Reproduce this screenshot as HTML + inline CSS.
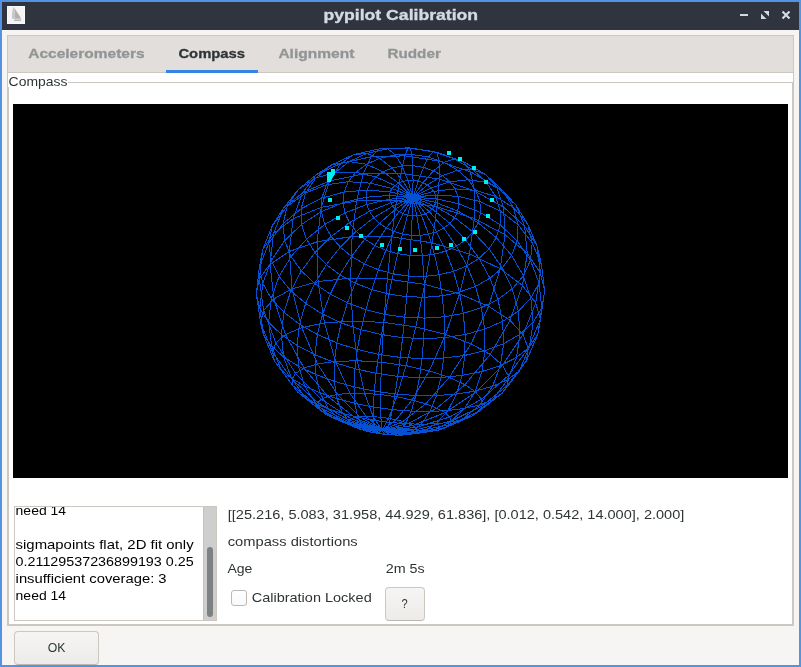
<!DOCTYPE html>
<html><head><meta charset="utf-8"><style>
html,body{margin:0;padding:0;}
body{width:801px;height:667px;overflow:hidden;position:relative;background:#5294e2;font-family:"Liberation Sans",sans-serif;}
div{position:absolute;box-sizing:border-box;}
svg{position:absolute;left:0;top:0;}
text{font-family:"Liberation Sans",sans-serif;}
</style></head><body>
<div style="left:2px;top:2px;width:797px;height:28px;background:#2f343f;"></div>
<div style="left:2px;top:30px;width:797px;height:635px;background:#f6f5f4;"></div>
<!-- notebook header -->
<div style="left:7px;top:35px;width:787px;height:38px;background:#e1dedb;border:1px solid #cdc7c2;"></div>
<div style="left:166px;top:70px;width:92px;height:3px;background:#3584e4;"></div>
<!-- page -->
<div style="left:7px;top:73px;width:787px;height:553px;background:#fff;border:1px solid #cdc7c2;border-top:none;"></div>
<!-- static box -->
<div style="left:8px;top:82px;width:785px;height:543px;border:1px solid #cdc7c2;"></div>
<div style="left:8px;top:74px;width:60px;height:13px;background:#fff;"></div>
<!-- canvas -->
<div style="left:13px;top:104px;width:775px;height:374px;background:#000;overflow:hidden;">
<svg width="775" height="374" viewBox="0 0 775 374" style="position:absolute;left:0;top:0">
<path d="M399.85 93.27 L423.17 94.77 L445.93 99.82 L467.52 108.50 L487.22 120.86 L504.19 136.86 L517.47 156.34 L526.03 178.91 L528.80 203.89 L524.86 230.24 L513.57 256.55 L494.82 281.05 L469.24 301.82 L438.26 317.07 L404.04 325.42 L369.16 326.19 M399.85 93.27 L422.47 91.01 L445.02 92.33 L466.86 97.55 L487.19 106.94 L505.05 120.71 L519.26 138.90 L528.57 161.27 L531.66 187.16 L527.43 215.40 L515.25 244.29 L495.22 271.68 L468.39 295.28 L436.69 313.03 L402.70 323.52 L369.16 326.19 M399.85 93.27 L420.73 87.34 L441.93 84.88 L462.85 86.42 L482.68 92.50 L500.39 103.63 L514.70 120.13 L524.13 141.99 L527.20 168.67 L522.71 198.90 L510.04 230.64 L489.57 261.30 L462.73 288.10 L431.88 308.67 L399.80 321.50 L369.16 326.19 M399.85 93.27 L418.00 83.95 L436.69 77.87 L455.40 75.74 L473.40 78.36 L489.67 86.57 L502.91 101.04 L511.61 122.10 L514.20 149.39 L509.48 181.57 L496.95 216.31 L477.21 250.44 L451.99 280.65 L423.82 304.19 L395.43 319.48 L369.16 326.19 M399.85 93.27 L414.38 81.02 L429.46 71.70 L444.69 66.18 L459.43 65.48 L472.80 70.76 L483.63 83.07 L490.53 103.11 L492.07 130.75 L487.19 164.71 L475.58 202.30 L458.01 239.83 L436.26 273.40 L412.72 299.87 L389.75 317.54 L369.16 326.19 M399.85 93.27 L410.04 78.69 L420.58 66.75 L431.16 58.42 L441.32 54.89 L450.38 57.58 L457.44 67.87 L461.45 86.81 L461.35 114.57 L456.41 149.90 L446.58 189.89 L432.66 230.36 L416.20 266.89 L399.09 295.98 L383.02 315.80 L369.16 326.19 M399.85 93.27 L405.19 77.10 L410.50 63.35 L415.58 53.06 L420.13 47.52 L423.77 48.32 L425.99 57.06 L426.23 75.06 L424.02 102.71 L419.15 138.84 L411.83 180.42 L402.78 222.96 L393.04 261.67 L383.69 292.79 L375.57 314.35 L369.16 326.19 M399.85 93.27 L400.06 76.32 L399.79 61.72 L398.93 50.51 L397.37 44.04 L395.03 43.92 L391.87 51.86 L387.93 69.26 L383.42 96.62 L378.72 132.86 L374.33 174.96 L370.78 218.38 L368.46 258.21 L367.50 290.53 L367.82 313.28 L369.16 326.19 M399.85 93.27 L394.93 76.41 L389.08 61.97 L382.32 50.97 L374.73 44.73 L366.54 44.79 L358.16 52.77 L350.22 70.00 L343.56 96.95 L339.11 132.59 L337.63 174.06 L339.46 217.03 L344.36 256.76 L351.59 289.37 L360.17 312.65 L369.16 326.19 M399.85 93.27 L390.04 77.34 L379.00 64.05 L366.84 54.34 L353.88 49.41 L340.60 50.66 L327.81 59.47 L316.57 76.93 L308.22 103.37 L304.07 137.78 L305.07 177.59 L311.45 218.91 L322.55 257.40 L336.98 289.34 L353.04 312.48 L369.16 326.19 M399.85 93.27 L385.65 79.07 L370.08 67.79 L353.44 60.27 L336.18 57.55 L319.03 60.74 L303.03 70.93 L289.54 88.89 L280.12 114.72 L276.28 147.46 L279.08 184.87 L288.75 223.63 L304.48 259.93 L324.55 290.40 L346.81 312.77 L369.16 326.19 M399.85 93.27 L381.95 81.50 L362.79 72.93 L342.78 68.27 L322.54 68.32 L302.92 73.90 L285.08 85.75 L270.43 104.29 L260.57 129.43 L257.02 160.25 L260.88 194.86 L272.46 230.52 L291.04 264.05 L314.90 292.44 L341.75 313.50 L369.16 326.19 M399.85 93.27 L379.10 84.48 L357.40 79.13 L335.27 77.73 L313.40 80.83 L292.67 88.94 L274.21 102.46 L259.37 121.54 L249.60 145.93 L246.31 174.75 L250.58 206.46 L262.83 238.85 L282.58 269.31 L308.39 295.26 L338.10 314.62 L369.16 326.19 M399.85 93.27 L377.22 87.87 L354.10 86.02 L331.05 88.03 L308.77 94.18 L288.09 104.72 L270.01 119.77 L255.70 139.28 L246.41 162.88 L243.34 189.77 L247.51 218.71 L259.45 247.92 L278.99 275.30 L305.10 298.65 L335.95 316.05 L369.16 326.19 M399.85 93.27 L376.36 91.49 L352.90 93.24 L330.02 98.60 L308.35 107.63 L288.61 120.35 L271.63 136.70 L258.34 156.49 L249.75 179.29 L246.87 204.43 L250.61 230.85 L261.57 257.15 L279.85 281.63 L304.90 302.40 L335.35 317.71 L369.16 326.19 M399.85 93.27 L376.53 95.19 L353.72 100.45 L331.93 108.94 L311.67 120.55 L293.51 135.15 L278.08 152.55 L266.09 172.49 L258.33 194.55 L255.60 218.12 L258.69 242.35 L268.24 266.11 L284.58 287.97 L307.53 306.32 L336.25 319.53 L369.16 326.19 M399.85 93.27 L377.68 98.80 L356.42 107.35 L336.45 118.66 L318.18 132.51 L302.00 148.66 L288.39 166.88 L277.83 186.88 L270.93 208.26 L268.32 230.50 L270.65 252.89 L278.57 274.48 L292.51 294.07 L312.63 310.22 L338.54 321.41 L369.16 326.19 M399.85 93.27 L379.74 102.18 L360.76 113.70 L343.19 127.46 L327.30 143.18 L313.36 160.60 L301.68 179.45 L292.60 199.45 L286.55 220.26 L284.02 241.41 L285.55 262.29 L291.72 282.09 L303.03 299.75 L319.82 313.98 L342.06 323.28 L369.16 326.19 M399.85 93.27 L382.60 105.20 L366.51 119.28 L351.76 135.10 L338.52 152.36 L326.95 170.78 L317.23 190.13 L309.61 210.12 L304.39 230.46 L301.91 250.74 L302.62 270.44 L307.00 288.80 L315.55 304.89 L328.70 317.46 L346.64 325.07 L369.16 326.19 M399.85 93.27 L386.13 107.75 L373.41 123.94 L361.78 141.43 L351.35 159.91 L342.20 179.13 L334.46 198.86 L328.26 218.86 L323.81 238.87 L321.36 258.51 L321.24 277.29 L323.84 294.56 L329.58 309.38 L338.88 320.58 L352.07 326.72 L369.16 326.19 M399.85 93.27 L390.19 109.74 L381.18 127.56 L372.89 146.33 L365.37 165.75 L358.68 185.59 L352.87 205.64 L348.05 225.69 L344.33 245.49 L341.89 264.69 L340.94 282.85 L341.75 299.30 L344.66 313.16 L350.01 323.27 L358.12 328.16 L369.16 326.19 M399.85 93.27 L394.61 111.10 L389.55 130.04 L384.73 149.71 L380.19 169.81 L375.97 190.12 L372.09 210.45 L368.61 230.60 L365.59 250.33 L363.12 269.31 L361.33 287.08 L360.36 303.00 L360.42 316.19 L361.75 325.46 L364.59 329.36 L369.16 326.19 M399.85 93.27 L399.22 111.79 L398.25 131.33 L396.99 151.51 L395.47 172.04 L393.72 192.69 L391.76 213.28 L389.60 233.60 L387.26 253.40 L384.74 272.34 L382.08 289.97 L379.31 305.62 L376.50 318.40 L373.75 327.11 L371.24 330.27 L369.16 326.19 M399.85 93.27 L403.86 111.78 L407.01 131.39 L409.34 151.69 L410.87 172.39 L411.62 193.26 L411.58 214.08 L410.74 234.63 L409.06 254.64 L406.46 273.76 L402.90 291.49 L398.28 307.13 L392.56 319.76 L385.71 328.17 L377.83 330.86 L369.16 326.19 M399.85 93.27 L408.35 111.07 L415.54 130.19 L421.43 150.22 L426.02 170.83 L429.30 191.77 L431.22 212.79 L431.71 233.64 L430.68 254.01 L427.99 273.50 L423.47 291.57 L416.94 307.47 L408.24 320.23 L397.29 328.61 L384.16 331.12 L369.16 326.19 M399.85 93.27 L412.52 109.67 L423.57 127.75 L432.94 147.08 L440.57 167.31 L446.39 188.16 L450.30 209.33 L452.16 230.53 L451.79 251.40 L448.97 271.47 L443.43 290.13 L434.91 306.57 L423.18 319.75 L408.16 328.38 L389.97 331.02 L369.16 326.19 M399.85 93.27 L416.20 107.64 L430.80 124.12 L443.48 142.29 L454.08 161.81 L462.46 182.35 L468.39 203.58 L471.65 225.17 L471.95 246.66 L468.96 267.53 L462.33 287.06 L451.74 304.35 L436.95 318.27 L417.94 327.48 L395.05 330.56 L369.16 326.19 M399.85 93.27 L419.23 105.03 L436.93 119.36 L452.64 135.90 L466.09 154.32 L476.96 174.28 L484.93 195.45 L489.62 217.41 L490.59 239.67 L487.41 261.56 L479.63 282.27 L466.89 300.74 L449.04 315.74 L426.25 325.88 L399.19 329.74 L369.16 326.19 M399.85 93.27 L421.48 101.93 L441.67 113.60 L460.00 128.00 L476.02 144.88 L489.27 163.95 L499.23 184.85 L505.33 207.15 L506.97 230.25 L503.56 253.41 L494.57 275.62 L479.68 295.67 L458.89 312.15 L432.68 323.58 L402.18 328.59 L369.16 326.19 M399.85 93.27 L422.82 98.47 L444.75 107.01 L465.11 118.78 L483.29 133.64 L498.63 151.41 L510.41 171.77 L517.84 194.29 L520.11 218.33 L516.44 242.97 L506.26 267.04 L489.31 289.09 L465.85 307.49 L436.81 320.62 L403.84 327.13 L369.16 326.19 M423.17 94.77 L422.47 91.01 L420.73 87.34 L418.00 83.95 L414.38 81.02 L410.04 78.69 L405.19 77.10 L400.06 76.32 L394.93 76.41 L390.04 77.34 L385.65 79.07 L381.95 81.50 L379.10 84.48 L377.22 87.87 L376.36 91.49 L376.53 95.19 L377.68 98.80 L379.74 102.18 L382.60 105.20 L386.13 107.75 L390.19 109.74 L394.61 111.10 L399.22 111.79 L403.86 111.78 L408.35 111.07 L412.52 109.67 L416.20 107.64 L419.23 105.03 L421.48 101.93 L422.82 98.47 Z M445.93 99.82 L445.02 92.33 L441.93 84.88 L436.69 77.87 L429.46 71.70 L420.58 66.75 L410.50 63.35 L399.79 61.72 L389.08 61.97 L379.00 64.05 L370.08 67.79 L362.79 72.93 L357.40 79.13 L354.10 86.02 L352.90 93.24 L353.72 100.45 L356.42 107.35 L360.76 113.70 L366.51 119.28 L373.41 123.94 L381.18 127.56 L389.55 130.04 L398.25 131.33 L407.01 131.39 L415.54 130.19 L423.57 127.75 L430.80 124.12 L436.93 119.36 L441.67 113.60 L444.75 107.01 Z M467.52 108.50 L466.86 97.55 L462.85 86.42 L455.40 75.74 L444.69 66.18 L431.16 58.42 L415.58 53.06 L398.93 50.51 L382.32 50.97 L366.84 54.34 L353.44 60.27 L342.78 68.27 L335.27 77.73 L331.05 88.03 L330.02 98.60 L331.93 108.94 L336.45 118.66 L343.19 127.46 L351.76 135.10 L361.78 141.43 L372.89 146.33 L384.73 149.71 L396.99 151.51 L409.34 151.69 L421.43 150.22 L432.94 147.08 L443.48 142.29 L452.64 135.90 L460.00 128.00 L465.11 118.78 Z M487.22 120.86 L487.19 106.94 L482.68 92.50 L473.40 78.36 L459.43 65.48 L441.32 54.89 L420.13 47.52 L397.37 44.04 L374.73 44.73 L353.88 49.41 L336.18 57.55 L322.54 68.32 L313.40 80.83 L308.77 94.18 L308.35 107.63 L311.67 120.55 L318.18 132.51 L327.30 143.18 L338.52 152.36 L351.35 159.91 L365.37 165.75 L380.19 169.81 L395.47 172.04 L410.87 172.39 L426.02 170.83 L440.57 167.31 L454.08 161.81 L466.09 154.32 L476.02 144.88 L483.29 133.64 Z M504.19 136.86 L505.05 120.71 L500.39 103.63 L489.67 86.57 L472.80 70.76 L450.38 57.58 L423.77 48.32 L395.03 43.92 L366.54 44.79 L340.60 50.66 L319.03 60.74 L302.92 73.90 L292.67 88.94 L288.09 104.72 L288.61 120.35 L293.51 135.15 L302.00 148.66 L313.36 160.60 L326.95 170.78 L342.20 179.13 L358.68 185.59 L375.97 190.12 L393.72 192.69 L411.62 193.26 L429.30 191.77 L446.39 188.16 L462.46 182.35 L476.96 174.28 L489.27 163.95 L498.63 151.41 Z M517.47 156.34 L519.26 138.90 L514.70 120.13 L502.91 101.04 L483.63 83.07 L457.44 67.87 L425.99 57.06 L391.87 51.86 L358.16 52.77 L327.81 59.47 L303.03 70.93 L285.08 85.75 L274.21 102.46 L270.01 119.77 L271.63 136.70 L278.08 152.55 L288.39 166.88 L301.68 179.45 L317.23 190.13 L334.46 198.86 L352.87 205.64 L372.09 210.45 L391.76 213.28 L411.58 214.08 L431.22 212.79 L450.30 209.33 L468.39 203.58 L484.93 195.45 L499.23 184.85 L510.41 171.77 Z M526.03 178.91 L528.57 161.27 L524.13 141.99 L511.61 122.10 L490.53 103.11 L461.45 86.81 L426.23 75.06 L387.93 69.26 L350.22 70.00 L316.57 76.93 L289.54 88.89 L270.43 104.29 L259.37 121.54 L255.70 139.28 L258.34 156.49 L266.09 172.49 L277.83 186.88 L292.60 199.45 L309.61 210.12 L328.26 218.86 L348.05 225.69 L368.61 230.60 L389.60 233.60 L410.74 234.63 L431.71 233.64 L452.16 230.53 L471.65 225.17 L489.62 217.41 L505.33 207.15 L517.84 194.29 Z M528.80 203.89 L531.66 187.16 L527.20 168.67 L514.20 149.39 L492.07 130.75 L461.35 114.57 L424.02 102.71 L383.42 96.62 L343.56 96.95 L308.22 103.37 L280.12 114.72 L260.57 129.43 L249.60 145.93 L246.41 162.88 L249.75 179.29 L258.33 194.55 L270.93 208.26 L286.55 220.26 L304.39 230.46 L323.81 238.87 L344.33 245.49 L365.59 250.33 L387.26 253.40 L409.06 254.64 L430.68 254.01 L451.79 251.40 L471.95 246.66 L490.59 239.67 L506.97 230.25 L520.11 218.33 Z M524.86 230.24 L527.43 215.40 L522.71 198.90 L509.48 181.57 L487.19 164.71 L456.41 149.90 L419.15 138.84 L378.72 132.86 L339.11 132.59 L304.07 137.78 L276.28 147.46 L257.02 160.25 L246.31 174.75 L243.34 189.77 L246.87 204.43 L255.60 218.12 L268.32 230.50 L284.02 241.41 L301.91 250.74 L321.36 258.51 L341.89 264.69 L363.12 269.31 L384.74 272.34 L406.46 273.76 L427.99 273.50 L448.97 271.47 L468.96 267.53 L487.41 261.56 L503.56 253.41 L516.44 242.97 Z M513.57 256.55 L515.25 244.29 L510.04 230.64 L496.95 216.31 L475.58 202.30 L446.58 189.89 L411.83 180.42 L374.33 174.96 L337.63 174.06 L305.07 177.59 L279.08 184.87 L260.88 194.86 L250.58 206.46 L247.51 218.71 L250.61 230.85 L258.69 242.35 L270.65 252.89 L285.55 262.29 L302.62 270.44 L321.24 277.29 L340.94 282.85 L361.33 287.08 L382.08 289.97 L402.90 291.49 L423.47 291.57 L443.43 290.13 L462.33 287.06 L479.63 282.27 L494.57 275.62 L506.26 267.04 Z M494.82 281.05 L495.22 271.68 L489.57 261.30 L477.21 250.44 L458.01 239.83 L432.66 230.36 L402.78 222.96 L370.78 218.38 L339.46 217.03 L311.45 218.91 L288.75 223.63 L272.46 230.52 L262.83 238.85 L259.45 247.92 L261.57 257.15 L268.24 266.11 L278.57 274.48 L291.72 282.09 L307.00 288.80 L323.84 294.56 L341.75 299.30 L360.36 303.00 L379.31 305.62 L398.28 307.13 L416.94 307.47 L434.91 306.57 L451.74 304.35 L466.89 300.74 L479.68 295.67 L489.31 289.09 Z M469.24 301.82 L468.39 295.28 L462.73 288.10 L451.99 280.65 L436.26 273.40 L416.20 266.89 L393.04 261.67 L368.46 258.21 L344.36 256.76 L322.55 257.40 L304.48 259.93 L291.04 264.05 L282.58 269.31 L278.99 275.30 L279.85 281.63 L284.58 287.97 L292.51 294.07 L303.03 299.75 L315.55 304.89 L329.58 309.38 L344.66 313.16 L360.42 316.19 L376.50 318.40 L392.56 319.76 L408.24 320.23 L423.18 319.75 L436.95 318.27 L449.04 315.74 L458.89 312.15 L465.85 307.49 Z M438.26 317.07 L436.69 313.03 L431.88 308.67 L423.82 304.19 L412.72 299.87 L399.09 295.98 L383.69 292.79 L367.50 290.53 L351.59 289.37 L336.98 289.34 L324.55 290.40 L314.90 292.44 L308.39 295.26 L305.10 298.65 L304.90 302.40 L307.53 306.32 L312.63 310.22 L319.82 313.98 L328.70 317.46 L338.88 320.58 L350.01 323.27 L361.75 325.46 L373.75 327.11 L385.71 328.17 L397.29 328.61 L408.16 328.38 L417.94 327.48 L426.25 325.88 L432.68 323.58 L436.81 320.62 Z M404.04 325.42 L402.70 323.52 L399.80 321.50 L395.43 319.48 L389.75 317.54 L383.02 315.80 L375.57 314.35 L367.82 313.28 L360.17 312.65 L353.04 312.48 L346.81 312.77 L341.75 313.50 L338.10 314.62 L335.95 316.05 L335.35 317.71 L336.25 319.53 L338.54 321.41 L342.06 323.28 L346.64 325.07 L352.07 326.72 L358.12 328.16 L364.59 329.36 L371.24 330.27 L377.83 330.86 L384.16 331.12 L389.97 331.02 L395.05 330.56 L399.19 329.74 L402.18 328.59 L403.84 327.13 Z" fill="none" stroke="#0650d2" stroke-width="1" shape-rendering="crispEdges"/>
<g fill="#00eeee"><rect x="434" y="47" width="4" height="4"/><rect x="445" y="53" width="4" height="4"/><rect x="459" y="62" width="4" height="4"/><rect x="471" y="76" width="4" height="4"/><rect x="477" y="94" width="4" height="4"/><rect x="473" y="110" width="4" height="4"/><rect x="460" y="126" width="4" height="4"/><rect x="449" y="133" width="4" height="4"/><rect x="436" y="139" width="4" height="4"/><rect x="422" y="142" width="4" height="4"/><rect x="400" y="144" width="4" height="4"/><rect x="385" y="143" width="4" height="4"/><rect x="367" y="139" width="4" height="4"/><rect x="346" y="130" width="4" height="4"/><rect x="332" y="122" width="4" height="4"/><rect x="323" y="112" width="4" height="4"/><rect x="315" y="94" width="4" height="4"/><path d="M318 65 H322 V70 L320 73 L318 77 V78 H314 V68 H318 Z"/></g>
</svg></div>
<!-- textarea -->
<div style="left:14px;top:506px;width:203px;height:115px;background:#fff;border:1px solid #cdc7c2;"></div>
<div style="left:203px;top:507px;width:13px;height:113px;background:#cecece;border-left:1px solid #c5c1bd;"></div>
<div style="left:207px;top:547px;width:6px;height:70px;background:#7e8182;border-radius:3px;"></div>
<!-- checkbox -->
<div style="left:231px;top:590px;width:16px;height:16px;border:1px solid #bfb8b1;border-radius:3px;background:linear-gradient(#ffffff,#f9f8f8);"></div>
<!-- ? button -->
<div style="left:385px;top:587px;width:40px;height:34px;border:1px solid #cdc7c2;border-bottom-color:#bfb8b1;border-radius:4px;background:linear-gradient(#f6f5f4,#edebe9);"></div>
<!-- OK button -->
<div style="left:14px;top:631px;width:85px;height:34px;border:1px solid #cdc7c2;border-bottom-color:#bfb8b1;border-radius:4px;background:linear-gradient(#f6f5f4,#edebe9);"></div>
<!-- title icon -->
<div style="left:7px;top:6px;width:18px;height:18px;background:#fafafa;"></div>
<svg width="801" height="667" viewBox="0 0 801 667" style="will-change:transform">
<defs><clipPath id="taclip"><rect x="15" y="507" width="188" height="113"/></clipPath></defs>
<rect x="8" y="7" width="16" height="16" fill="#f4f4f4"/><path d="M13.2 7.2 Q14.2 7.4 14.6 8.5 L14.6 18.8 L12 18.8 Q11.9 12 13.2 7.2 Z" fill="#c4c4c4"/><path d="M14.8 8.5 L21.3 18.8 L14.8 18.8 Z" fill="#b0b0b0"/><path d="M13.6 19.4 L21.8 19.4 L20.6 21 L14.6 21 Z" fill="#b4b4b4"/>
<g fill="none" stroke="#d3dae3" stroke-width="2">
<path d="M740 15 H748"/>
</g>
<path d="M761 19 L761 13.5 L766.5 19 Z M769 11 L769 16.5 L763.5 11 Z" fill="#d3dae3"/>
<path d="M782.5 11.5 L789.5 18.5 M789.5 11.5 L782.5 18.5" stroke="#d3dae3" stroke-width="2.2" fill="none"/>
<text x="323.5" y="20.2" font-size="14.8" font-weight="bold" fill="#d3dae3" stroke="#d3dae3" stroke-width="0.35" textLength="154.6" lengthAdjust="spacingAndGlyphs">pypilot Calibration</text>
<text x="28.2" y="58.2" font-size="13.6" font-weight="bold" fill="#929595" stroke="#929595" stroke-width="0.3" textLength="116.5" lengthAdjust="spacingAndGlyphs">Accelerometers</text>
<text x="178.4" y="58.2" font-size="13.6" font-weight="bold" fill="#2e3436" stroke="#2e3436" stroke-width="0.3" textLength="66.7" lengthAdjust="spacingAndGlyphs">Compass</text>
<text x="278.4" y="58.2" font-size="13.6" font-weight="bold" fill="#929595" stroke="#929595" stroke-width="0.3" textLength="76.0" lengthAdjust="spacingAndGlyphs">Alignment</text>
<text x="387.4" y="58.2" font-size="13.6" font-weight="bold" fill="#929595" stroke="#929595" stroke-width="0.3" textLength="53.5" lengthAdjust="spacingAndGlyphs">Rudder</text>
<text x="8.6" y="86" font-size="13.6" font-weight="normal" fill="#2e3436" textLength="58.8" lengthAdjust="spacingAndGlyphs">Compass</text>
<text x="227.8" y="519" font-size="13.6" font-weight="normal" fill="#2e3436" textLength="456.5" lengthAdjust="spacingAndGlyphs">[[25.216, 5.083, 31.958, 44.929, 61.836], [0.012, 0.542, 14.000], 2.000]</text>
<text x="227.7" y="545.6" font-size="13.6" font-weight="normal" fill="#2e3436" textLength="130" lengthAdjust="spacingAndGlyphs">compass distortions</text>
<text x="227.4" y="573" font-size="13.6" font-weight="normal" fill="#2e3436" textLength="25" lengthAdjust="spacingAndGlyphs">Age</text>
<text x="385.7" y="573" font-size="13.6" font-weight="normal" fill="#2e3436" textLength="39" lengthAdjust="spacingAndGlyphs">2m 5s</text>
<text x="251.7" y="602" font-size="13.6" font-weight="normal" fill="#2e3436" textLength="120" lengthAdjust="spacingAndGlyphs">Calibration Locked</text>
<text x="401.5" y="608" font-size="13.6" font-weight="normal" fill="#2e3436" textLength="6.2" lengthAdjust="spacingAndGlyphs">?</text>
<text x="47.8" y="652" font-size="13.6" font-weight="normal" fill="#2e3436" textLength="17.7" lengthAdjust="spacingAndGlyphs">OK</text>
<g clip-path="url(#taclip)"><text x="15.6" y="514.5" font-size="13.6" font-weight="normal" fill="#000000" textLength="50.5" lengthAdjust="spacingAndGlyphs">need 14</text>
<text x="15.6" y="548.5" font-size="13.6" font-weight="normal" fill="#000000" textLength="178" lengthAdjust="spacingAndGlyphs">sigmapoints flat, 2D fit only</text>
<text x="15.6" y="565.5" font-size="13.6" font-weight="normal" fill="#000000" textLength="178" lengthAdjust="spacingAndGlyphs">0.21129537236899193 0.25</text>
<text x="15.6" y="582.5" font-size="13.6" font-weight="normal" fill="#000000" textLength="151" lengthAdjust="spacingAndGlyphs">insufficient coverage: 3</text>
<text x="15.6" y="599.5" font-size="13.6" font-weight="normal" fill="#000000" textLength="50.5" lengthAdjust="spacingAndGlyphs">need 14</text></g>
</svg>
</body></html>
